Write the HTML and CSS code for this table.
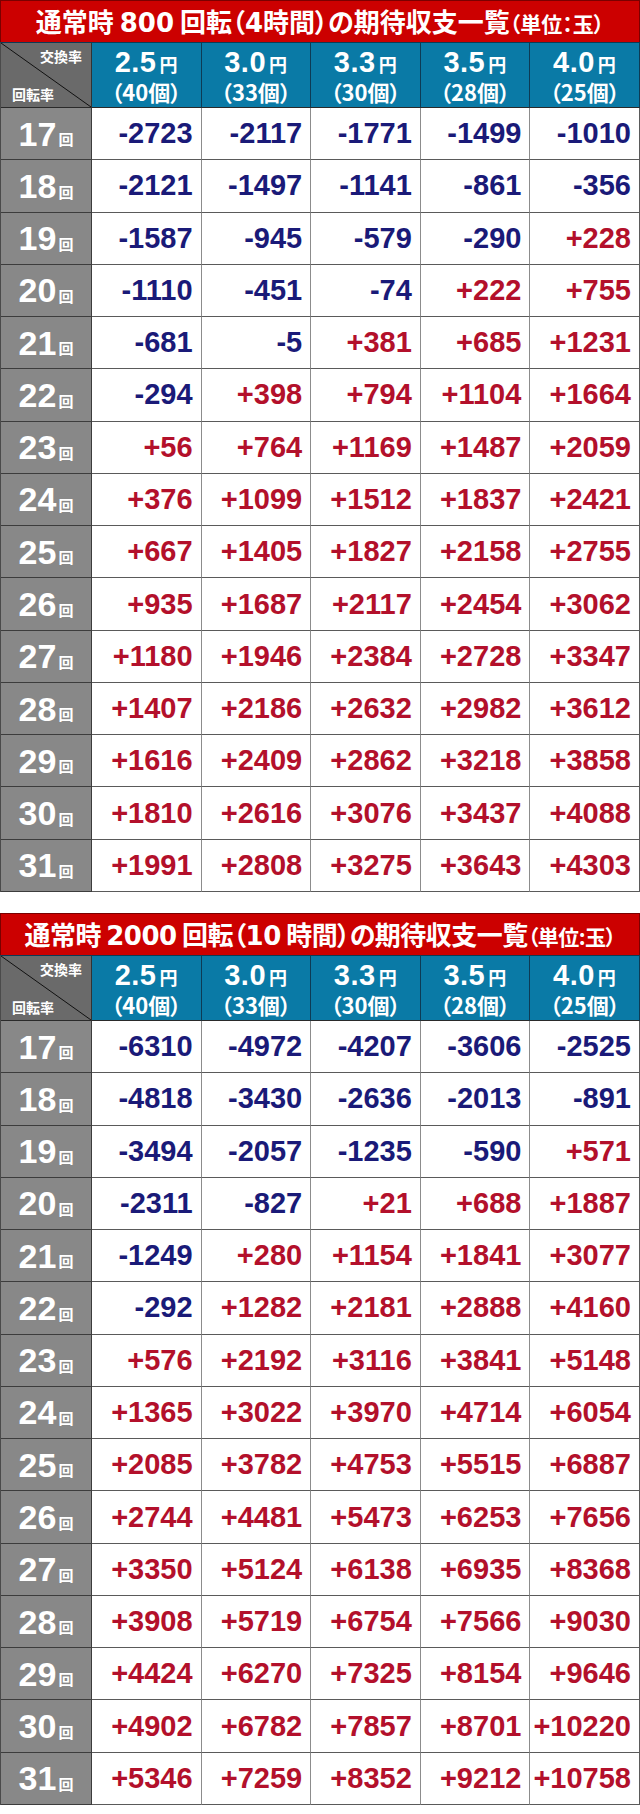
FILE: index.html
```html
<!DOCTYPE html>
<html lang="ja">
<head>
<meta charset="utf-8">
<link rel="stylesheet" href="styles.css">
</head>
<body>
<section class="block">
  <h2 class="title"><span class="tline">通常時 <span class="d">800</span> 回転（<span class="d">4</span>時間）の期待収支一覧<span class="unit">（単位：玉）</span></span></h2>
  <div class="grid">
    <div class="corner"><span class="cx">交換率</span><span class="cr">回転率</span><svg class="diag" viewBox="0 0 100 100" preserveAspectRatio="none"><line x1="0" y1="0" x2="100" y2="100" stroke="#111" stroke-width="1" vector-effect="non-scaling-stroke"/></svg></div>
    <div class="hd"><span class="rate">2.5<span class="yen">円</span></span><span class="balls">（40個）</span></div>
    <div class="hd"><span class="rate">3.0<span class="yen">円</span></span><span class="balls">（33個）</span></div>
    <div class="hd"><span class="rate">3.3<span class="yen">円</span></span><span class="balls">（30個）</span></div>
    <div class="hd"><span class="rate">3.5<span class="yen">円</span></span><span class="balls">（28個）</span></div>
    <div class="hd"><span class="rate">4.0<span class="yen">円</span></span><span class="balls">（25個）</span></div>

    <div class="lab">17<span class="kai">回</span></div><div class="c n">-2723</div><div class="c n">-2117</div><div class="c n">-1771</div><div class="c n">-1499</div><div class="c n">-1010</div>
    <div class="lab">18<span class="kai">回</span></div><div class="c n">-2121</div><div class="c n">-1497</div><div class="c n">-1141</div><div class="c n">-861</div><div class="c n">-356</div>
    <div class="lab">19<span class="kai">回</span></div><div class="c n">-1587</div><div class="c n">-945</div><div class="c n">-579</div><div class="c n">-290</div><div class="c p">+228</div>
    <div class="lab">20<span class="kai">回</span></div><div class="c n">-1110</div><div class="c n">-451</div><div class="c n">-74</div><div class="c p">+222</div><div class="c p">+755</div>
    <div class="lab">21<span class="kai">回</span></div><div class="c n">-681</div><div class="c n">-5</div><div class="c p">+381</div><div class="c p">+685</div><div class="c p">+1231</div>
    <div class="lab">22<span class="kai">回</span></div><div class="c n">-294</div><div class="c p">+398</div><div class="c p">+794</div><div class="c p">+1104</div><div class="c p">+1664</div>
    <div class="lab">23<span class="kai">回</span></div><div class="c p">+56</div><div class="c p">+764</div><div class="c p">+1169</div><div class="c p">+1487</div><div class="c p">+2059</div>
    <div class="lab">24<span class="kai">回</span></div><div class="c p">+376</div><div class="c p">+1099</div><div class="c p">+1512</div><div class="c p">+1837</div><div class="c p">+2421</div>
    <div class="lab">25<span class="kai">回</span></div><div class="c p">+667</div><div class="c p">+1405</div><div class="c p">+1827</div><div class="c p">+2158</div><div class="c p">+2755</div>
    <div class="lab">26<span class="kai">回</span></div><div class="c p">+935</div><div class="c p">+1687</div><div class="c p">+2117</div><div class="c p">+2454</div><div class="c p">+3062</div>
    <div class="lab">27<span class="kai">回</span></div><div class="c p">+1180</div><div class="c p">+1946</div><div class="c p">+2384</div><div class="c p">+2728</div><div class="c p">+3347</div>
    <div class="lab">28<span class="kai">回</span></div><div class="c p">+1407</div><div class="c p">+2186</div><div class="c p">+2632</div><div class="c p">+2982</div><div class="c p">+3612</div>
    <div class="lab">29<span class="kai">回</span></div><div class="c p">+1616</div><div class="c p">+2409</div><div class="c p">+2862</div><div class="c p">+3218</div><div class="c p">+3858</div>
    <div class="lab">30<span class="kai">回</span></div><div class="c p">+1810</div><div class="c p">+2616</div><div class="c p">+3076</div><div class="c p">+3437</div><div class="c p">+4088</div>
    <div class="lab">31<span class="kai">回</span></div><div class="c p">+1991</div><div class="c p">+2808</div><div class="c p">+3275</div><div class="c p">+3643</div><div class="c p">+4303</div>
  </div>
</section>

<section class="block second">
  <h2 class="title tight"><span class="tline">通常時 <span class="d">2000</span> 回転（<span class="d">10</span> 時間）の期待収支一覧<span class="unit">（単位:玉）</span></span></h2>
  <div class="grid">
    <div class="corner"><span class="cx">交換率</span><span class="cr">回転率</span><svg class="diag" viewBox="0 0 100 100" preserveAspectRatio="none"><line x1="0" y1="0" x2="100" y2="100" stroke="#111" stroke-width="1" vector-effect="non-scaling-stroke"/></svg></div>
    <div class="hd"><span class="rate">2.5<span class="yen">円</span></span><span class="balls">（40個）</span></div>
    <div class="hd"><span class="rate">3.0<span class="yen">円</span></span><span class="balls">（33個）</span></div>
    <div class="hd"><span class="rate">3.3<span class="yen">円</span></span><span class="balls">（30個）</span></div>
    <div class="hd"><span class="rate">3.5<span class="yen">円</span></span><span class="balls">（28個）</span></div>
    <div class="hd"><span class="rate">4.0<span class="yen">円</span></span><span class="balls">（25個）</span></div>

    <div class="lab">17<span class="kai">回</span></div><div class="c n">-6310</div><div class="c n">-4972</div><div class="c n">-4207</div><div class="c n">-3606</div><div class="c n">-2525</div>
    <div class="lab">18<span class="kai">回</span></div><div class="c n">-4818</div><div class="c n">-3430</div><div class="c n">-2636</div><div class="c n">-2013</div><div class="c n">-891</div>
    <div class="lab">19<span class="kai">回</span></div><div class="c n">-3494</div><div class="c n">-2057</div><div class="c n">-1235</div><div class="c n">-590</div><div class="c p">+571</div>
    <div class="lab">20<span class="kai">回</span></div><div class="c n">-2311</div><div class="c n">-827</div><div class="c p">+21</div><div class="c p">+688</div><div class="c p">+1887</div>
    <div class="lab">21<span class="kai">回</span></div><div class="c n">-1249</div><div class="c p">+280</div><div class="c p">+1154</div><div class="c p">+1841</div><div class="c p">+3077</div>
    <div class="lab">22<span class="kai">回</span></div><div class="c n">-292</div><div class="c p">+1282</div><div class="c p">+2181</div><div class="c p">+2888</div><div class="c p">+4160</div>
    <div class="lab">23<span class="kai">回</span></div><div class="c p">+576</div><div class="c p">+2192</div><div class="c p">+3116</div><div class="c p">+3841</div><div class="c p">+5148</div>
    <div class="lab">24<span class="kai">回</span></div><div class="c p">+1365</div><div class="c p">+3022</div><div class="c p">+3970</div><div class="c p">+4714</div><div class="c p">+6054</div>
    <div class="lab">25<span class="kai">回</span></div><div class="c p">+2085</div><div class="c p">+3782</div><div class="c p">+4753</div><div class="c p">+5515</div><div class="c p">+6887</div>
    <div class="lab">26<span class="kai">回</span></div><div class="c p">+2744</div><div class="c p">+4481</div><div class="c p">+5473</div><div class="c p">+6253</div><div class="c p">+7656</div>
    <div class="lab">27<span class="kai">回</span></div><div class="c p">+3350</div><div class="c p">+5124</div><div class="c p">+6138</div><div class="c p">+6935</div><div class="c p">+8368</div>
    <div class="lab">28<span class="kai">回</span></div><div class="c p">+3908</div><div class="c p">+5719</div><div class="c p">+6754</div><div class="c p">+7566</div><div class="c p">+9030</div>
    <div class="lab">29<span class="kai">回</span></div><div class="c p">+4424</div><div class="c p">+6270</div><div class="c p">+7325</div><div class="c p">+8154</div><div class="c p">+9646</div>
    <div class="lab">30<span class="kai">回</span></div><div class="c p">+4902</div><div class="c p">+6782</div><div class="c p">+7857</div><div class="c p">+8701</div><div class="c p">+10220</div>
    <div class="lab">31<span class="kai">回</span></div><div class="c p">+5346</div><div class="c p">+7259</div><div class="c p">+8352</div><div class="c p">+9212</div><div class="c p">+10758</div>
  </div>
</section>
</body>
</html>
```

FILE: styles.css
```css
html, body {
  margin: 0;
  padding: 0;
  background: #ffffff;
}
body {
  width: 640px;
  font-family: "Liberation Sans", "Noto Sans CJK JP", sans-serif;
}
.block {
  width: 640px;
}
.second {
  margin-top: 21px;
}
.title {
  margin: 0;
  height: 42px;
  box-sizing: border-box;
  background: #cc0000;
  border: 1px solid #7a0000;
  border-bottom: none;
  color: #ffffff;
  text-align: center;
  font-family: "Noto Sans CJK JP", sans-serif;
  font-weight: 700;
  font-size: 26px;
  line-height: 40px;
  white-space: nowrap;
  font-feature-settings: "palt";
}
.title.tight {
  letter-spacing: -0.5px;
}
.tline {
  display: inline-block;
  vertical-align: top;
}
.title .d {
  font-family: "DejaVu Sans", "Noto Sans CJK JP", sans-serif;
  font-weight: 700;
  font-size: 26px;
}
.title .unit {
  font-size: 21px;
}
.grid {
  display: grid;
  grid-template-columns: 91px repeat(5, 1fr);
  grid-template-rows: 65px repeat(15, 52.27px);
  width: 640px;
  box-sizing: border-box;
  border-left: 1px solid #4a4a4a;
  border-top: 1px solid #0d3b55;
}
.hd, .corner {
  box-sizing: border-box;
  border-right: 1px solid #0d3b55;
  border-bottom: 1px solid #2a2a2a;
  background: #0a7aa6;
  color: #ffffff;
  display: flex;
  flex-direction: column;
  align-items: center;
  justify-content: center;
  font-weight: 700;
  line-height: 1;
}
.rate {
  display: block;
  font-family: "Liberation Sans", sans-serif;
  font-size: 29px;
  letter-spacing: 0.5px;
}
.yen {
  font-family: "Noto Sans CJK JP", sans-serif;
  font-size: 18px;
  margin-left: 3px;
}
.balls {
  display: block;
  margin-top: 3px;
  font-family: "Noto Sans CJK JP", sans-serif;
  font-size: 22px;
  font-feature-settings: "palt";
}
.corner {
  position: relative;
  background: #6a6a6a;
  border-right-color: #333333;
}
.cx, .cr {
  position: absolute;
  font-family: "Noto Sans CJK JP", sans-serif;
  font-size: 14px;
  color: #ffffff;
  line-height: 1;
}
.cx {
  top: 6px;
  right: 9px;
}
.cr {
  bottom: 6px;
  left: 11px;
}
.diag {
  position: absolute;
  left: 0;
  top: 0;
  width: 100%;
  height: 100%;
}
.lab {
  box-sizing: border-box;
  background: #888888;
  color: #ffffff;
  border-right: 1px solid #3c3c3c;
  border-bottom: 1px solid #3c3c3c;
  display: flex;
  align-items: center;
  justify-content: center;
  font-family: "Liberation Sans", sans-serif;
  font-weight: 700;
  font-size: 34px;
  line-height: 1;
  white-space: nowrap;
}
.kai {
  font-family: "Noto Sans CJK JP", sans-serif;
  font-size: 15px;
  margin-left: 2px;
  align-self: flex-end;
  margin-bottom: 13px;
}
.c {
  box-sizing: border-box;
  border-right: 1px solid #8c8c8c;
  border-bottom: 1px solid #5a5a5a;
  display: flex;
  align-items: center;
  justify-content: flex-end;
  padding-right: 8px;
  font-weight: 700;
  font-size: 29px;
  line-height: 1;
  white-space: nowrap;
}
.c:nth-child(6n) {
  border-right-color: #5a5a5a;
}
.n {
  color: #1a1a78;
}
.p {
  color: #b3102b;
}
```
